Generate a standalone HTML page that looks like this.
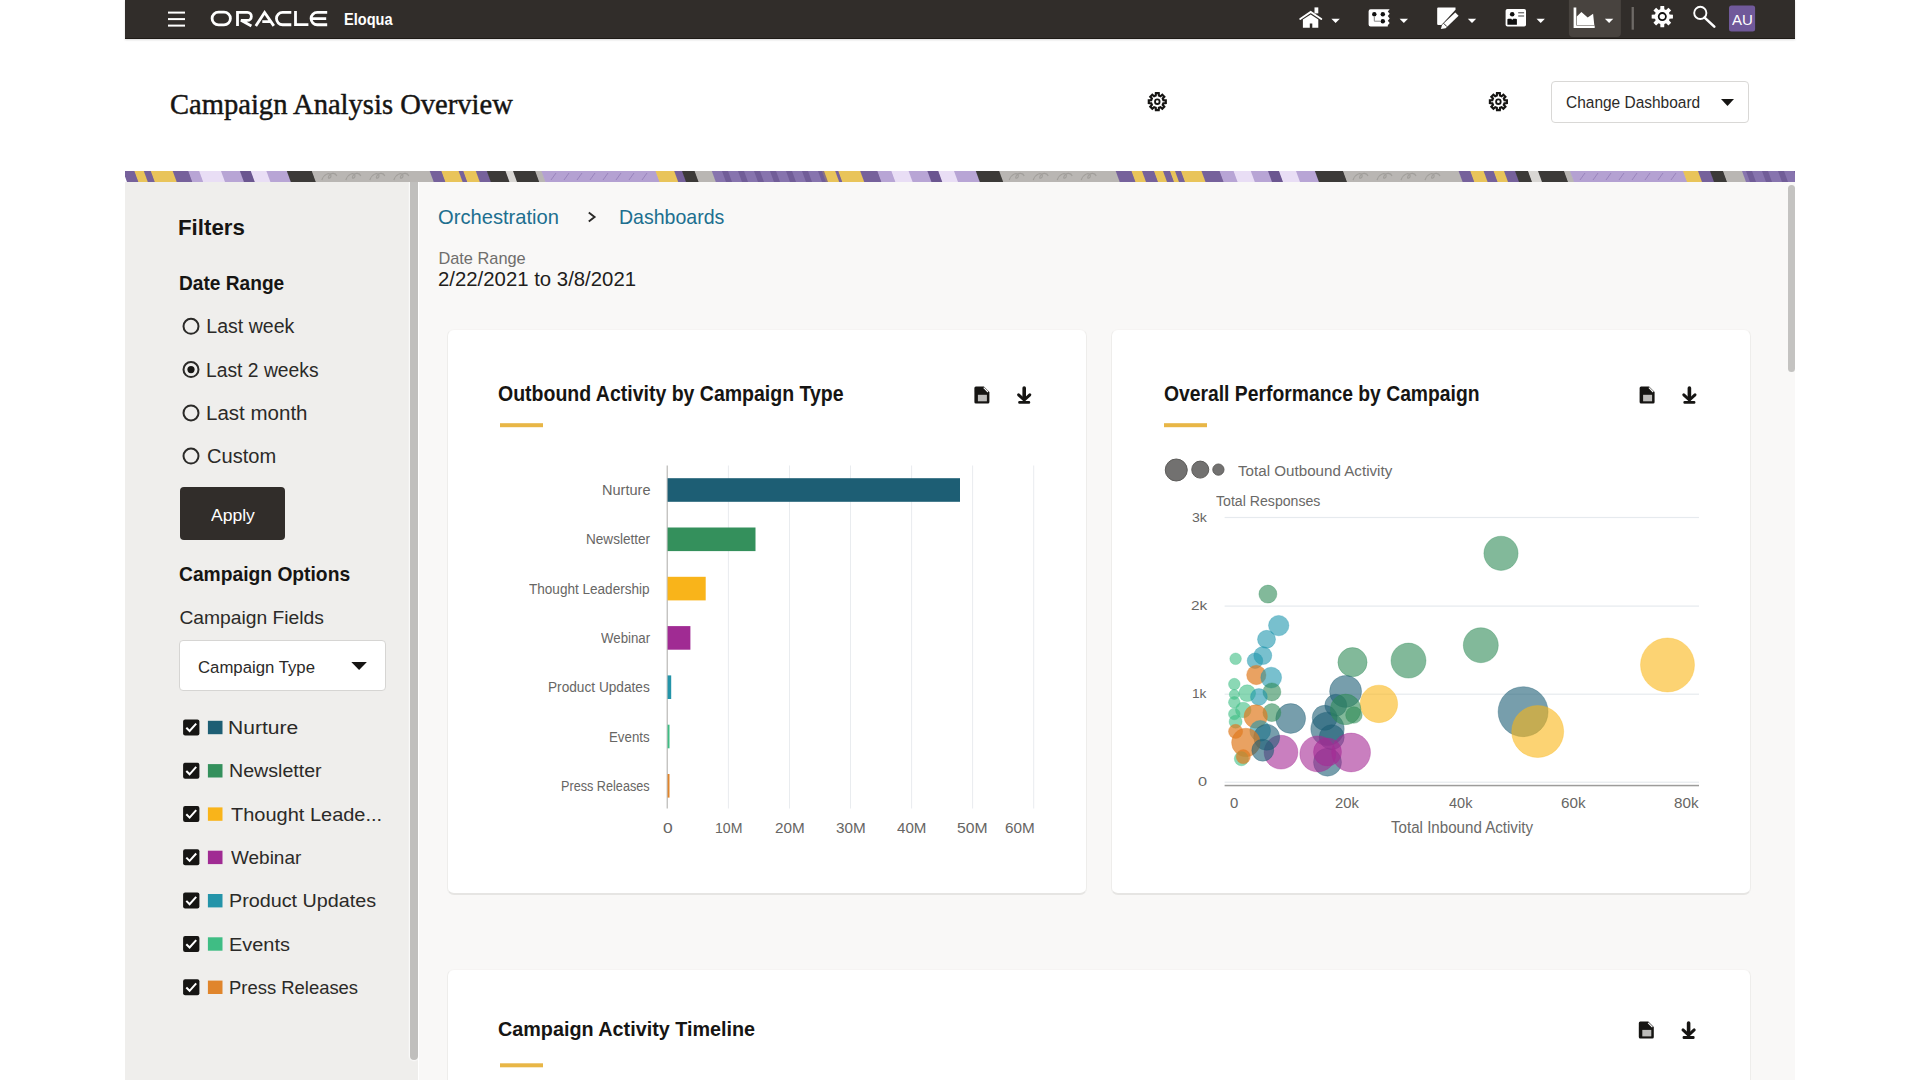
<!DOCTYPE html>
<html><head><meta charset="utf-8"><title>Campaign Analysis Overview</title>
<style>
*{margin:0;padding:0;box-sizing:border-box}
html,body{width:1920px;height:1080px;overflow:hidden;background:#fff;font-family:"Liberation Sans",sans-serif}
.t{position:absolute;white-space:nowrap;line-height:1;transform-origin:0 0}
.b{position:absolute}
svg{position:absolute;left:0;top:0;overflow:visible}
</style></head><body>

<div class="b" style="left:125px;top:0;width:1670px;height:39px;background:#312d2a;border-bottom:1.5px solid #1e1a16;box-shadow:0 1px 2px rgba(0,0,0,.15)"></div>
<div class="b" style="left:125px;top:182px;width:293px;height:898px;background:#efeeec"></div>
<div class="b" style="left:410.4px;top:182px;width:7.3px;height:878px;background:#c0bfbd;border-radius:0 0 4px 4px;box-shadow:0 0 1.5px 1px rgba(255,255,255,.8)"></div>
<div class="b" style="left:418.5px;top:182px;width:1376.5px;height:898px;background:#f9f8f7"></div>
<div class="b" style="left:1787.5px;top:185px;width:7px;height:187px;background:#c4c3c1;border-radius:4px"></div>
<div class="b" style="left:125px;top:171px;width:1670px;height:11px;overflow:hidden"><svg width="1670" height="11" viewBox="125 171 1670 11" style="position:absolute;left:0;top:0">
<polygon points="123.0,171 135.0,171 139.0,182 127.0,182" fill="#76619b"/>
<polygon points="134.4,171 144.4,171 148.4,182 138.4,182" fill="#e9c45a"/>
<polygon points="143.8,171 151.4,171 155.4,182 147.8,182" fill="#76619b"/>
<polygon points="150.8,171 173.3,171 177.3,182 154.8,182" fill="#e9c45a"/>
<polygon points="172.7,171 188.9,171 192.9,182 176.7,182" fill="#76619b"/>
<polygon points="188.3,171 199.8,171 203.8,182 192.3,182" fill="#b8a5d5"/>
<polygon points="199.2,171 221.6,171 225.6,182 203.2,182" fill="#e9def5"/>
<polygon points="221.0,171 240.5,171 244.5,182 225.0,182" fill="#b8a5d5"/>
<polygon points="239.9,171 251.4,171 255.4,182 243.9,182" fill="#6b5690"/>
<polygon points="250.8,171 267.0,171 271.0,182 254.8,182" fill="#e9def5"/>
<polygon points="266.4,171 287.4,171 291.4,182 270.4,182" fill="#b8a5d5"/>
<polygon points="286.8,171 312.4,171 316.4,182 290.8,182" fill="#3c3a38"/>
<polygon points="311.8,171 430.3,171 434.3,182 315.8,182" fill="#b9b6b3"/>
<polygon points="429.7,171 442.0,171 446.0,182 433.7,182" fill="#76619b"/>
<polygon points="441.4,171 459.2,171 463.2,182 445.4,182" fill="#e9c45a"/>
<polygon points="458.6,171 463.9,171 467.9,182 462.6,182" fill="#76619b"/>
<polygon points="463.3,171 476.4,171 480.4,182 467.3,182" fill="#e9c45a"/>
<polygon points="475.8,171 487.4,171 491.4,182 479.8,182" fill="#76619b"/>
<polygon points="486.8,171 506.1,171 510.1,182 490.8,182" fill="#3c3a38"/>
<polygon points="505.5,171 513.6,171 517.6,182 509.5,182" fill="#d9d7d4"/>
<polygon points="513.0,171 535.8,171 539.8,182 517.0,182" fill="#3c3a38"/>
<polygon points="535.2,171 542.0,171 546.0,182 539.2,182" fill="#b9b6b3"/>
<polygon points="541.4,171 656.1,171 660.1,182 545.4,182" fill="#b4a1d2"/>
<polygon points="655.5,171 674.9,171 678.9,182 659.5,182" fill="#e9c45a"/>
<polygon points="674.2,171 682.6,171 686.6,182 678.2,182" fill="#76619b"/>
<polygon points="682.0,171 695.2,171 699.2,182 686.0,182" fill="#3c3a38"/>
<polygon points="694.6,171 712.4,171 716.4,182 698.6,182" fill="#b9b6b3"/>
<polygon points="711.8,171 822.5,171 826.5,182 715.8,182" fill="#8774ae"/>
<polygon points="821.9,171 835.8,171 839.8,182 825.9,182" fill="#e9c45a"/>
<polygon points="835.2,171 838.9,171 842.9,182 839.2,182" fill="#76619b"/>
<polygon points="838.3,171 860.8,171 864.8,182 842.3,182" fill="#e9c45a"/>
<polygon points="860.2,171 878.0,171 882.0,182 864.2,182" fill="#76619b"/>
<polygon points="877.4,171 892.0,171 896.0,182 881.4,182" fill="#b8a5d5"/>
<polygon points="891.4,171 909.2,171 913.2,182 895.4,182" fill="#e9def5"/>
<polygon points="908.6,171 928.0,171 932.0,182 912.6,182" fill="#b8a5d5"/>
<polygon points="927.4,171 938.9,171 942.9,182 931.4,182" fill="#6b5690"/>
<polygon points="938.3,171 954.6,171 958.6,182 942.3,182" fill="#e9def5"/>
<polygon points="954.0,171 976.4,171 980.4,182 958.0,182" fill="#b8a5d5"/>
<polygon points="975.8,171 999.9,171 1003.9,182 979.8,182" fill="#3c3a38"/>
<polygon points="999.2,171 1116.3,171 1120.3,182 1003.2,182" fill="#b9b6b3"/>
<polygon points="1115.7,171 1132.1,171 1136.1,182 1119.7,182" fill="#76619b"/>
<polygon points="1131.5,171 1142.6,171 1146.6,182 1135.5,182" fill="#e9c45a"/>
<polygon points="1142.0,171 1154.6,171 1158.6,182 1146.0,182" fill="#76619b"/>
<polygon points="1154.0,171 1163.6,171 1167.6,182 1158.0,182" fill="#e9c45a"/>
<polygon points="1163.0,171 1170.6,171 1174.6,182 1167.0,182" fill="#76619b"/>
<polygon points="1170.0,171 1175.6,171 1179.6,182 1174.0,182" fill="#e9c45a"/>
<polygon points="1175.0,171 1181.6,171 1185.6,182 1179.0,182" fill="#76619b"/>
<polygon points="1181.0,171 1202.1,171 1206.1,182 1185.0,182" fill="#e9c45a"/>
<polygon points="1201.5,171 1220.2,171 1224.2,182 1205.5,182" fill="#76619b"/>
<polygon points="1219.6,171 1234.2,171 1238.2,182 1223.6,182" fill="#b8a5d5"/>
<polygon points="1233.6,171 1251.4,171 1255.4,182 1237.6,182" fill="#e9def5"/>
<polygon points="1250.8,171 1268.6,171 1272.6,182 1254.8,182" fill="#b8a5d5"/>
<polygon points="1268.0,171 1279.6,171 1283.6,182 1272.0,182" fill="#6b5690"/>
<polygon points="1279.0,171 1296.6,171 1300.6,182 1283.0,182" fill="#e9def5"/>
<polygon points="1296.0,171 1315.5,171 1319.5,182 1300.0,182" fill="#b8a5d5"/>
<polygon points="1314.9,171 1343.6,171 1347.6,182 1318.9,182" fill="#3c3a38"/>
<polygon points="1343.0,171 1459.2,171 1463.2,182 1347.0,182" fill="#b9b6b3"/>
<polygon points="1458.6,171 1470.9,171 1474.9,182 1462.6,182" fill="#76619b"/>
<polygon points="1470.3,171 1484.2,171 1488.2,182 1474.3,182" fill="#e9c45a"/>
<polygon points="1483.6,171 1494.2,171 1498.2,182 1487.6,182" fill="#76619b"/>
<polygon points="1493.6,171 1504.6,171 1508.6,182 1497.6,182" fill="#e9c45a"/>
<polygon points="1504.0,171 1515.6,171 1519.6,182 1508.0,182" fill="#76619b"/>
<polygon points="1515.0,171 1528.6,171 1532.6,182 1519.0,182" fill="#3c3a38"/>
<polygon points="1528.0,171 1538.6,171 1542.6,182 1532.0,182" fill="#d9d7d4"/>
<polygon points="1538.0,171 1564.6,171 1568.6,182 1542.0,182" fill="#3c3a38"/>
<polygon points="1564.0,171 1570.6,171 1574.6,182 1568.0,182" fill="#b9b6b3"/>
<polygon points="1570.0,171 1683.6,171 1687.6,182 1574.0,182" fill="#b4a1d2"/>
<polygon points="1683.0,171 1698.6,171 1702.6,182 1687.0,182" fill="#e9c45a"/>
<polygon points="1698.0,171 1710.6,171 1714.6,182 1702.0,182" fill="#76619b"/>
<polygon points="1710.0,171 1723.6,171 1727.6,182 1714.0,182" fill="#3c3a38"/>
<polygon points="1723.0,171 1742.6,171 1746.6,182 1727.0,182" fill="#b9b6b3"/>
<polygon points="1742.0,171 1798.6,171 1802.6,182 1746.0,182" fill="#8774ae"/>
<path d="M321.8 180 C323.8 174 329.8 172 330.8 175 C331.8 178 326.8 180 328.8 176 C330.8 172 335.8 173 336.8 176 M345.8 180 C347.8 174 353.8 172 354.8 175 C355.8 178 350.8 180 352.8 176 C354.8 172 359.8 173 360.8 176 M369.8 180 C371.8 174 377.8 172 378.8 175 C379.8 178 374.8 180 376.8 176 C378.8 172 383.8 173 384.8 176 M393.8 180 C395.8 174 401.8 172 402.8 175 C403.8 178 398.8 180 400.8 176 C402.8 172 407.8 173 408.8 176 " fill="none" stroke="#9b9895" stroke-width="1.1" opacity=".8"/>
<path d="M551 180 L556 173" stroke="#8f79b5" stroke-width="1" opacity=".7"/>
<path d="M564 180 L569 173" stroke="#8f79b5" stroke-width="1" opacity=".7"/>
<path d="M577 180 L582 173" stroke="#8f79b5" stroke-width="1" opacity=".7"/>
<path d="M590 180 L595 173" stroke="#8f79b5" stroke-width="1" opacity=".7"/>
<path d="M603 180 L608 173" stroke="#8f79b5" stroke-width="1" opacity=".7"/>
<path d="M616 180 L621 173" stroke="#8f79b5" stroke-width="1" opacity=".7"/>
<path d="M629 180 L634 173" stroke="#8f79b5" stroke-width="1" opacity=".7"/>
<path d="M642 180 L647 173" stroke="#8f79b5" stroke-width="1" opacity=".7"/>
<path d="M1009.2 180 C1011.2 174 1017.2 172 1018.2 175 C1019.2 178 1014.2 180 1016.2 176 C1018.2 172 1023.2 173 1024.2 176 M1033.2 180 C1035.2 174 1041.2 172 1042.2 175 C1043.2 178 1038.2 180 1040.2 176 C1042.2 172 1047.2 173 1048.2 176 M1057.2 180 C1059.2 174 1065.2 172 1066.2 175 C1067.2 178 1062.2 180 1064.2 176 C1066.2 172 1071.2 173 1072.2 176 M1081.2 180 C1083.2 174 1089.2 172 1090.2 175 C1091.2 178 1086.2 180 1088.2 176 C1090.2 172 1095.2 173 1096.2 176 " fill="none" stroke="#9b9895" stroke-width="1.1" opacity=".8"/>
<path d="M1353.0 180 C1355.0 174 1361.0 172 1362.0 175 C1363.0 178 1358.0 180 1360.0 176 C1362.0 172 1367.0 173 1368.0 176 M1377.0 180 C1379.0 174 1385.0 172 1386.0 175 C1387.0 178 1382.0 180 1384.0 176 C1386.0 172 1391.0 173 1392.0 176 M1401.0 180 C1403.0 174 1409.0 172 1410.0 175 C1411.0 178 1406.0 180 1408.0 176 C1410.0 172 1415.0 173 1416.0 176 M1425.0 180 C1427.0 174 1433.0 172 1434.0 175 C1435.0 178 1430.0 180 1432.0 176 C1434.0 172 1439.0 173 1440.0 176 " fill="none" stroke="#9b9895" stroke-width="1.1" opacity=".8"/>
<path d="M1580 180 L1585 173" stroke="#8f79b5" stroke-width="1" opacity=".7"/>
<path d="M1593 180 L1598 173" stroke="#8f79b5" stroke-width="1" opacity=".7"/>
<path d="M1606 180 L1611 173" stroke="#8f79b5" stroke-width="1" opacity=".7"/>
<path d="M1619 180 L1624 173" stroke="#8f79b5" stroke-width="1" opacity=".7"/>
<path d="M1632 180 L1637 173" stroke="#8f79b5" stroke-width="1" opacity=".7"/>
<path d="M1645 180 L1650 173" stroke="#8f79b5" stroke-width="1" opacity=".7"/>
<path d="M1658 180 L1663 173" stroke="#8f79b5" stroke-width="1" opacity=".7"/>
<path d="M1671 180 L1676 173" stroke="#8f79b5" stroke-width="1" opacity=".7"/>
<polygon points="722,171 728,171 732,182 726,182" fill="#6a5690" opacity=".75"/>
<polygon points="738,171 744,171 748,182 742,182" fill="#6a5690" opacity=".75"/>
<polygon points="754,171 760,171 764,182 758,182" fill="#6a5690" opacity=".75"/>
<polygon points="770,171 776,171 780,182 774,182" fill="#6a5690" opacity=".75"/>
<polygon points="786,171 792,171 796,182 790,182" fill="#6a5690" opacity=".75"/>
<polygon points="802,171 808,171 812,182 806,182" fill="#6a5690" opacity=".75"/>
<polygon points="818,171 824,171 828,182 822,182" fill="#6a5690" opacity=".75"/>
<polygon points="1746,171 1752,171 1756,182 1750,182" fill="#6a5690" opacity=".75"/>
<polygon points="1762,171 1768,171 1772,182 1766,182" fill="#6a5690" opacity=".75"/>
<polygon points="1778,171 1784,171 1788,182 1782,182" fill="#6a5690" opacity=".75"/>
<polygon points="1794,171 1800,171 1804,182 1798,182" fill="#6a5690" opacity=".75"/>
</svg></div>
<svg width="1920" height="40">
<rect x="168" y="11.6" width="17" height="2" fill="#fff"/>
<rect x="168" y="18.1" width="17" height="2" fill="#fff"/>
<rect x="168" y="24.6" width="17" height="2" fill="#fff"/>
<g fill="none" stroke="#fff" stroke-width="2.8">
<rect x="212.1" y="12.15" width="18.3" height="12.8" rx="6.4"/>
<path d="M237.5 26 V12.45 H247.4 A3.95 3.95 0 0 1 247.4 20.35 H241 L251.4 26"/>
<path d="M255.8 25.9 L264.6 12.4 L273.8 25.9 M262.3 21.6 H270.6"/>
<path d="M291.3 12.45 H282.6 A6.15 6.15 0 0 0 282.6 24.75 H291.3"/>
<path d="M295.5 11.1 V24.7 H308.4"/>
<path d="M327.2 12.45 H317.2 A6.15 6.15 0 0 0 317.2 24.75 H327.2 M311.4 18.6 H326.2"/>
</g>
<path d="M1300.2 19 L1310.7 12 L1321.3 19" fill="none" stroke="#fff" stroke-width="1.9" stroke-linecap="round"/>
<rect x="1314.5" y="7.4" width="3.8" height="6" fill="#fff"/>
<path d="M1302.9 19.6 L1310.7 14.4 L1318.3 19.6 V27.8 H1312.3 V23.4 H1309.8 V27.8 H1302.9Z" fill="#fff"/>
<path d="M1370.6 9.2 H1389.7 L1387.8 11.5 L1389.7 13.8 L1387.8 16.1 L1389.7 18.4 L1387.8 20.7 L1389.7 23 L1387.8 25.3 V26.6 H1370.6 Q1368.6 26.6 1368.6 24.6 V11.2 Q1368.6 9.2 1370.6 9.2Z" fill="#fff"/>
<circle cx="1374.3" cy="14.3" r="2.2" fill="#111"/><circle cx="1382.8" cy="14.3" r="2.2" fill="#111"/><circle cx="1382.8" cy="21.2" r="2.2" fill="#111"/>
<path d="M1374.3 17 V21.2 H1380" fill="none" stroke="#888" stroke-width="1"/>
<path d="M1438.2 7.4 H1455.5 V9.8 L1441.4 25 H1438.2 Q1437.2 25 1437.2 24 V8.4 Q1437.2 7.4 1438.2 7.4Z" fill="#fff"/>
<path d="M1455.3 12.6 L1458.6 15.7 L1445.6 28.2 L1440.9 29 L1442 24.9Z" fill="#fff"/>
<path d="M1443.6 23.3 L1446.9 26.6" stroke="#312d2a" stroke-width="1"/>
<rect x="1505.6" y="8.9" width="20.4" height="17.7" rx="1.8" fill="#fff"/>
<circle cx="1512.2" cy="14.3" r="2.3" fill="#111"/><path d="M1507.4 24.7 V19.6 Q1507.4 18.7 1508.5 18.7 H1511.3 L1512.2 20 L1513.1 18.7 H1515.9 Q1516.9 18.7 1516.9 19.6 V24.7Z" fill="#111"/>
<rect x="1518.2" y="12" width="5.9" height="1.4" fill="#777"/><rect x="1518.2" y="15.3" width="5.9" height="1.4" fill="#777"/>
<path d="M1568.9 0 H1620.9 V33 Q1620.9 37 1616.9 37 H1572.9 Q1568.9 37 1568.9 33Z" fill="#48433f"/>
<path d="M1573.6 7.4 H1576.3 V25.4 H1594.7 V28.1 H1573.6Z" fill="#fff"/>
<path d="M1576.8 25 V16.4 L1581.4 12.1 L1587.7 17.4 L1593.1 13.7 L1594.3 25Z" fill="#fff"/>
<path d="M1331.4 18.8 H1339.8 L1335.6 23Z" fill="#fff"/>
<path d="M1399.6 18.8 H1408.0 L1403.8 23Z" fill="#fff"/>
<path d="M1467.8 18.8 H1476.2 L1472.0 23Z" fill="#fff"/>
<path d="M1536.5 18.8 H1544.9 L1540.7 23Z" fill="#fff"/>
<path d="M1604.9 18.8 H1613.3 L1609.1 23Z" fill="#fff"/>
<rect x="1631.6" y="7" width="2.3" height="22.7" fill="#6e6a66"/>
<path d="M1660.27 9.28 L1660.40 5.97 L1664.20 5.97 L1664.33 9.28 L1666.04 9.98 L1668.48 7.74 L1671.16 10.42 L1668.92 12.86 L1669.62 14.57 L1672.93 14.70 L1672.93 18.50 L1669.62 18.63 L1668.92 20.34 L1671.16 22.78 L1668.48 25.46 L1666.04 23.22 L1664.33 23.92 L1664.20 27.23 L1660.40 27.23 L1660.27 23.92 L1658.56 23.22 L1656.12 25.46 L1653.44 22.78 L1655.68 20.34 L1654.98 18.63 L1651.67 18.50 L1651.67 14.70 L1654.98 14.57 L1655.68 12.86 L1653.44 10.42 L1656.12 7.74 L1658.56 9.98Z" fill="#fff"/>
<circle cx="1662.3" cy="16.6" r="3.6" fill="#fff" stroke="#111" stroke-width="1.8"/>
<circle cx="1700.3" cy="12.9" r="6.1" fill="none" stroke="#fff" stroke-width="1.9"/>
<path d="M1704.6 17.6 L1714.3 26.6" stroke="#fff" stroke-width="2.6" stroke-linecap="round"/>
<rect x="1729" y="5.4" width="26.1" height="26.1" rx="2.5" fill="#70599a"/>
</svg>
<div class="t" style="left:343.82px;top:12.16px;font-size:16.52px;font-weight:700;font-family:'Liberation Sans',sans-serif;color:#ffffff;transform:scaleX(0.8815);">Eloqua</div>
<div class="t" style="left:1732.0px;top:11.76px;font-size:15.22px;font-weight:400;font-family:'Liberation Sans',sans-serif;color:#ffffff;transform:scaleX(0.985);">AU</div>
<div class="t" style="left:170.01px;top:89.89px;font-size:28.92px;-webkit-text-stroke:0.45px #161513;font-weight:400;font-family:'Liberation Serif',serif;color:#161513;transform:scaleX(0.9884);">Campaign Analysis Overview</div>
<svg width="1920" height="140">
<path d="M1155.69 95.61 L1155.89 93.22 L1158.71 93.22 L1158.91 95.61 L1160.46 96.25 L1162.30 94.70 L1164.30 96.70 L1162.75 98.54 L1163.39 100.09 L1165.78 100.29 L1165.78 103.11 L1163.39 103.31 L1162.75 104.86 L1164.30 106.70 L1162.30 108.70 L1160.46 107.15 L1158.91 107.79 L1158.71 110.18 L1155.89 110.18 L1155.69 107.79 L1154.14 107.15 L1152.30 108.70 L1150.30 106.70 L1151.85 104.86 L1151.21 103.31 L1148.82 103.11 L1148.82 100.29 L1151.21 100.09 L1151.85 98.54 L1150.30 96.70 L1152.30 94.70 L1154.14 96.25Z" fill="none" stroke="#161513" stroke-width="2.2" stroke-linejoin="miter"/>
<circle cx="1157.3" cy="101.7" r="2.3" fill="none" stroke="#161513" stroke-width="1.8"/>
<path d="M1496.79 95.61 L1496.99 93.22 L1499.81 93.22 L1500.01 95.61 L1501.56 96.25 L1503.40 94.70 L1505.40 96.70 L1503.85 98.54 L1504.49 100.09 L1506.88 100.29 L1506.88 103.11 L1504.49 103.31 L1503.85 104.86 L1505.40 106.70 L1503.40 108.70 L1501.56 107.15 L1500.01 107.79 L1499.81 110.18 L1496.99 110.18 L1496.79 107.79 L1495.24 107.15 L1493.40 108.70 L1491.40 106.70 L1492.95 104.86 L1492.31 103.31 L1489.92 103.11 L1489.92 100.29 L1492.31 100.09 L1492.95 98.54 L1491.40 96.70 L1493.40 94.70 L1495.24 96.25Z" fill="none" stroke="#161513" stroke-width="2.2" stroke-linejoin="miter"/>
<circle cx="1498.4" cy="101.7" r="2.3" fill="none" stroke="#161513" stroke-width="1.8"/>
</svg>
<div class="b" style="left:1551px;top:81px;width:198px;height:42px;background:#fff;border:1px solid #d9d8d6;border-radius:4px"></div>
<div class="t" style="left:1566.03px;top:94.75px;font-size:15.94px;font-weight:400;font-family:'Liberation Sans',sans-serif;color:#2b2a28;transform:scaleX(0.9706);">Change Dashboard</div>
<svg width="1920" height="140"><path d="M1721 99 H1734 L1727.5 106Z" fill="#161513"/></svg>
<div class="t" style="left:178.05px;top:216.34px;font-size:22.9px;font-weight:700;font-family:'Liberation Sans',sans-serif;color:#161513;transform:scaleX(0.9727);">Filters</div>
<div class="t" style="left:179.04px;top:273.52px;font-size:19.86px;font-weight:700;font-family:'Liberation Sans',sans-serif;color:#161513;transform:scaleX(0.963);">Date Range</div>
<div class="t" style="left:206.3px;top:317.07px;font-size:19.57px;font-weight:400;font-family:'Liberation Sans',sans-serif;color:#2b2a28;">Last week</div>
<div class="t" style="left:206.33px;top:360.77px;font-size:19.57px;font-weight:400;font-family:'Liberation Sans',sans-serif;color:#2b2a28;transform:scaleX(0.9857);">Last 2 weeks</div>
<div class="t" style="left:206.2px;top:403.77px;font-size:19.57px;font-weight:400;font-family:'Liberation Sans',sans-serif;color:#2b2a28;transform:scaleX(1.0489);">Last month</div>
<div class="t" style="left:207.27px;top:446.67px;font-size:19.57px;font-weight:400;font-family:'Liberation Sans',sans-serif;color:#2b2a28;transform:scaleX(1.0262);">Custom</div>
<div class="t" style="left:179.41px;top:564.99px;font-size:19.42px;font-weight:700;font-family:'Liberation Sans',sans-serif;color:#161513;transform:scaleX(0.9918);">Campaign Options</div>
<div class="t" style="left:179.4px;top:608.02px;font-size:19.28px;font-weight:400;font-family:'Liberation Sans',sans-serif;color:#2b2a28;">Campaign Fields</div>
<svg width="1920" height="1080">
<circle cx="191" cy="326.3" r="7.5" fill="none" stroke="#2b2a28" stroke-width="2"/>
<circle cx="191" cy="369.6" r="7.5" fill="none" stroke="#2b2a28" stroke-width="2"/>
<circle cx="191" cy="369.6" r="3.6" fill="#161513"/>
<circle cx="191" cy="412.9" r="7.5" fill="none" stroke="#2b2a28" stroke-width="2"/>
<circle cx="191" cy="456.1" r="7.5" fill="none" stroke="#2b2a28" stroke-width="2"/>
</svg>
<div class="b" style="left:179.6px;top:487.4px;width:105.2px;height:52.6px;background:#312d2a;border-radius:4px"></div>
<div class="t" style="left:210.7px;top:506.84px;font-size:17.25px;font-weight:400;font-family:'Liberation Sans',sans-serif;color:#ffffff;transform:scaleX(1.0163);">Apply</div>
<div class="b" style="left:179.4px;top:639.6px;width:206.7px;height:51.1px;background:#fff;border:1px solid #d6d5d3;border-radius:4px"></div>
<div class="t" style="left:198.36px;top:659.33px;font-size:16.09px;font-weight:400;font-family:'Liberation Sans',sans-serif;color:#2b2a28;transform:scaleX(1.0414);">Campaign Type</div>
<svg width="1920" height="1080">
<path d="M351.3 662 H366.9 L359.1 670Z" fill="#161513"/>
<rect x="183.1" y="719.4" width="16.3" height="16" rx="2" fill="#161513"/>
<path d="M186.3 727.7 L189.6 731.0 L196.2 723.6" fill="none" stroke="#fff" stroke-width="2"/>
<rect x="207.9" y="720.8" width="14.6" height="13.4" fill="#1d5e74"/>
<rect x="183.1" y="762.7" width="16.3" height="16" rx="2" fill="#161513"/>
<path d="M186.3 771.0 L189.6 774.3 L196.2 766.9" fill="none" stroke="#fff" stroke-width="2"/>
<rect x="207.9" y="764.1" width="14.6" height="13.4" fill="#34905c"/>
<rect x="183.1" y="806.0" width="16.3" height="16" rx="2" fill="#161513"/>
<path d="M186.3 814.3 L189.6 817.6 L196.2 810.2" fill="none" stroke="#fff" stroke-width="2"/>
<rect x="207.9" y="807.4" width="14.6" height="13.4" fill="#f9b41a"/>
<rect x="183.1" y="849.3" width="16.3" height="16" rx="2" fill="#161513"/>
<path d="M186.3 857.6 L189.6 860.9 L196.2 853.5" fill="none" stroke="#fff" stroke-width="2"/>
<rect x="207.9" y="850.7" width="14.6" height="13.4" fill="#a02b93"/>
<rect x="183.1" y="892.6" width="16.3" height="16" rx="2" fill="#161513"/>
<path d="M186.3 900.9 L189.6 904.2 L196.2 896.8" fill="none" stroke="#fff" stroke-width="2"/>
<rect x="207.9" y="894.0" width="14.6" height="13.4" fill="#2494a9"/>
<rect x="183.1" y="935.9" width="16.3" height="16" rx="2" fill="#161513"/>
<path d="M186.3 944.2 L189.6 947.5 L196.2 940.1" fill="none" stroke="#fff" stroke-width="2"/>
<rect x="207.9" y="937.3" width="14.6" height="13.4" fill="#3fbd84"/>
<rect x="183.1" y="979.2" width="16.3" height="16" rx="2" fill="#161513"/>
<path d="M186.3 987.5 L189.6 990.8 L196.2 983.4" fill="none" stroke="#fff" stroke-width="2"/>
<rect x="207.9" y="980.6" width="14.6" height="13.4" fill="#e0852c"/>
</svg>
<div class="t" style="left:228.42px;top:718.02px;font-size:19.28px;font-weight:400;font-family:'Liberation Sans',sans-serif;color:#2b2a28;transform:scaleX(1.0918);">Nurture</div>
<div class="t" style="left:228.56px;top:761.32px;font-size:19.28px;font-weight:400;font-family:'Liberation Sans',sans-serif;color:#2b2a28;transform:scaleX(1.018);">Newsletter</div>
<div class="t" style="left:230.6px;top:804.62px;font-size:19.28px;font-weight:400;font-family:'Liberation Sans',sans-serif;color:#2b2a28;transform:scaleX(1.0375);">Thought Leade...</div>
<div class="t" style="left:230.6px;top:847.92px;font-size:19.28px;font-weight:400;font-family:'Liberation Sans',sans-serif;color:#2b2a28;transform:scaleX(0.9845);">Webinar</div>
<div class="t" style="left:228.55px;top:891.22px;font-size:19.28px;font-weight:400;font-family:'Liberation Sans',sans-serif;color:#2b2a28;transform:scaleX(1.0255);">Product Updates</div>
<div class="t" style="left:228.53px;top:934.52px;font-size:19.28px;font-weight:400;font-family:'Liberation Sans',sans-serif;color:#2b2a28;transform:scaleX(1.0339);">Events</div>
<div class="t" style="left:228.69px;top:977.82px;font-size:19.28px;font-weight:400;font-family:'Liberation Sans',sans-serif;color:#2b2a28;transform:scaleX(0.9568);">Press Releases</div>
<div class="t" style="left:438.44px;top:205.54px;font-size:21.01px;font-weight:400;font-family:'Liberation Sans',sans-serif;color:#206f8f;transform:scaleX(0.9597);">Orchestration</div>
<div class="t" style="left:619.44px;top:205.54px;font-size:21.01px;font-weight:400;font-family:'Liberation Sans',sans-serif;color:#206f8f;transform:scaleX(0.9306);">Dashboards</div>
<div class="t" style="left:438.4px;top:249.88px;font-size:16.38px;font-weight:400;font-family:'Liberation Sans',sans-serif;color:#6f6e6c;">Date Range</div>
<div class="t" style="left:438.38px;top:269.4px;font-size:20.0px;font-weight:400;font-family:'Liberation Sans',sans-serif;color:#1f1e1c;transform:scaleX(1.0176);">2/22/2021 to 3/8/2021</div>
<svg width="1920" height="1080"><path d="M588.8 212.4 L594.6 217 L588.8 221.6" fill="none" stroke="#2b2a28" stroke-width="1.9"/></svg>
<div class="b" style="left:446.8px;top:328.6px;width:639.8px;height:566.6px;background:#fff;border:1.5px solid #eeedeb;border-top-color:#f6f4f3;border-bottom:2px solid #e6e5e3;border-radius:7px"></div>
<div class="b" style="left:1111px;top:328.6px;width:639.8px;height:566.6px;background:#fff;border:1.5px solid #eeedeb;border-top-color:#f6f4f3;border-bottom:2px solid #e6e5e3;border-radius:7px"></div>
<div class="b" style="left:446.8px;top:968.6px;width:1303.8px;height:200px;background:#fff;border:1.5px solid #eeedeb;border-top-color:#f6f4f3;border-bottom:2px solid #e6e5e3;border-radius:7px"></div>
<div class="t" style="left:498.28px;top:382.61px;font-size:21.16px;font-weight:700;font-family:'Liberation Sans',sans-serif;color:#161513;transform:scaleX(0.9217);">Outbound Activity by Campaign Type</div>
<div class="t" style="left:1163.99px;top:382.61px;font-size:21.16px;font-weight:700;font-family:'Liberation Sans',sans-serif;color:#161513;transform:scaleX(0.9128);">Overall Performance by Campaign</div>
<div class="t" style="left:498.26px;top:1017.64px;font-size:21.01px;font-weight:700;font-family:'Liberation Sans',sans-serif;color:#161513;transform:scaleX(0.9412);">Campaign Activity Timeline</div>
<svg width="1920" height="1080">
<rect x="500" y="423.2" width="43" height="4" fill="#e8b646"/>
<rect x="1164" y="423.2" width="43" height="4" fill="#e8b646"/>
<rect x="500" y="1063.3" width="43" height="4" fill="#e8b646"/>
<path d="M975.9 386.4 H983.9 L989.4 391.9 V401.9 Q989.4 403.4 987.9 403.4 H975.9 Q974.4 403.4 974.4 401.9 V387.9 Q974.4 386.4 975.9 386.4Z" fill="#161513"/><rect x="977.9" y="394.79999999999995" width="9" height="6.5" fill="#bdbcba"/><path d="M983.6999999999999 387.7 L988.0 392.0" stroke="#fff" stroke-width="1.2"/>
<path d="M1024.2 388.0 V398.9" stroke="#161513" stroke-width="3.6" stroke-linecap="round"/><path d="M1018.6 394.79999999999995 L1024.2 400.0 L1029.8 394.79999999999995" fill="none" stroke="#161513" stroke-width="3" stroke-linejoin="round" stroke-linecap="round"/><rect x="1018.2" y="401.0" width="12" height="2.8" rx="1.2" fill="#161513"/>
<path d="M1641.1 386.4 H1649.1 L1654.6 391.9 V401.9 Q1654.6 403.4 1653.1 403.4 H1641.1 Q1639.6 403.4 1639.6 401.9 V387.9 Q1639.6 386.4 1641.1 386.4Z" fill="#161513"/><rect x="1643.1" y="394.79999999999995" width="9" height="6.5" fill="#bdbcba"/><path d="M1648.8999999999999 387.7 L1653.1999999999998 392.0" stroke="#fff" stroke-width="1.2"/>
<path d="M1689.4 388.0 V398.9" stroke="#161513" stroke-width="3.6" stroke-linecap="round"/><path d="M1683.8000000000002 394.79999999999995 L1689.4 400.0 L1695.0 394.79999999999995" fill="none" stroke="#161513" stroke-width="3" stroke-linejoin="round" stroke-linecap="round"/><rect x="1683.4" y="401.0" width="12" height="2.8" rx="1.2" fill="#161513"/>
<path d="M1640.3 1021.5 H1648.3 L1653.8 1027.0 V1037.0 Q1653.8 1038.5 1652.3 1038.5 H1640.3 Q1638.8 1038.5 1638.8 1037.0 V1023.0 Q1638.8 1021.5 1640.3 1021.5Z" fill="#161513"/><rect x="1642.3" y="1029.9" width="9" height="6.5" fill="#bdbcba"/><path d="M1648.1 1022.8 L1652.3999999999999 1027.1" stroke="#fff" stroke-width="1.2"/>
<path d="M1688.6 1023.1 V1034.0" stroke="#161513" stroke-width="3.6" stroke-linecap="round"/><path d="M1683.0 1029.9 L1688.6 1035.1 L1694.1999999999998 1029.9" fill="none" stroke="#161513" stroke-width="3" stroke-linejoin="round" stroke-linecap="round"/><rect x="1682.6" y="1036.1" width="12" height="2.8" rx="1.2" fill="#161513"/>
</svg>
<svg width="1920" height="1080">
<rect x="727.9" y="465.5" width="1" height="343" fill="#e9ecef"/>
<rect x="789.0" y="465.5" width="1" height="343" fill="#e9ecef"/>
<rect x="850.0" y="465.5" width="1" height="343" fill="#e9ecef"/>
<rect x="911.1" y="465.5" width="1" height="343" fill="#e9ecef"/>
<rect x="972.1" y="465.5" width="1" height="343" fill="#e9ecef"/>
<rect x="1033.2" y="465.5" width="1" height="343" fill="#e9ecef"/>
<rect x="666.6" y="465.5" width="1.3" height="343" fill="#bfbebc"/>
<rect x="667.6" y="478.2" width="292.4" height="23.6" fill="#1d5e74"/>
<rect x="667.6" y="527.5" width="87.9" height="23.6" fill="#34905c"/>
<rect x="667.6" y="576.8" width="38.1" height="23.6" fill="#f9b41a"/>
<rect x="667.6" y="626.1" width="22.8" height="23.6" fill="#a02b93"/>
<rect x="667.6" y="675.4" width="3.6" height="23.6" fill="#2494a9"/>
<rect x="667.6" y="724.7" width="1.9" height="23.6" fill="#3fbd84"/>
<rect x="667.6" y="774.0" width="1.9" height="23.6" fill="#e0852c"/>
</svg>
<div class="t" style="left:601.96px;top:483.1px;font-size:14.06px;font-weight:400;font-family:'Liberation Sans',sans-serif;color:#676664;transform:scaleX(1.0356);">Nurture</div>
<div class="t" style="left:585.83px;top:532.4px;font-size:14.06px;font-weight:400;font-family:'Liberation Sans',sans-serif;color:#676664;transform:scaleX(0.9662);">Newsletter</div>
<div class="t" style="left:529.0px;top:581.7px;font-size:14.06px;font-weight:400;font-family:'Liberation Sans',sans-serif;color:#676664;transform:scaleX(0.9648);">Thought Leadership</div>
<div class="t" style="left:600.5px;top:631.0px;font-size:14.06px;font-weight:400;font-family:'Liberation Sans',sans-serif;color:#676664;transform:scaleX(0.9442);">Webinar</div>
<div class="t" style="left:548.43px;top:680.3px;font-size:14.06px;font-weight:400;font-family:'Liberation Sans',sans-serif;color:#676664;transform:scaleX(0.9728);">Product Updates</div>
<div class="t" style="left:608.95px;top:729.6px;font-size:14.06px;font-weight:400;font-family:'Liberation Sans',sans-serif;color:#676664;transform:scaleX(0.9452);">Events</div>
<div class="t" style="left:561.3px;top:778.9px;font-size:14.06px;font-weight:400;font-family:'Liberation Sans',sans-serif;color:#676664;transform:scaleX(0.901);">Press Releases</div>
<div class="t" style="left:662.73px;top:821.5px;font-size:13.77px;font-weight:400;font-family:'Liberation Sans',sans-serif;color:#676664;transform:scaleX(1.2667);">0</div>
<div class="t" style="left:715.38px;top:821.5px;font-size:13.77px;font-weight:400;font-family:'Liberation Sans',sans-serif;color:#676664;transform:scaleX(1.024);">10M</div>
<div class="t" style="left:774.89px;top:821.5px;font-size:13.77px;font-weight:400;font-family:'Liberation Sans',sans-serif;color:#676664;transform:scaleX(1.108);">20M</div>
<div class="t" style="left:835.79px;top:821.5px;font-size:13.77px;font-weight:400;font-family:'Liberation Sans',sans-serif;color:#676664;transform:scaleX(1.108);">30M</div>
<div class="t" style="left:897.4px;top:821.5px;font-size:13.77px;font-weight:400;font-family:'Liberation Sans',sans-serif;color:#676664;transform:scaleX(1.0962);">40M</div>
<div class="t" style="left:957.16px;top:821.5px;font-size:13.77px;font-weight:400;font-family:'Liberation Sans',sans-serif;color:#676664;transform:scaleX(1.14);">50M</div>
<div class="t" style="left:1004.89px;top:821.5px;font-size:13.77px;font-weight:400;font-family:'Liberation Sans',sans-serif;color:#676664;transform:scaleX(1.108);">60M</div>
<svg width="1920" height="1080">
<circle cx="1176.25" cy="470" r="11" fill="#727170" stroke="#5d5c5a" stroke-width="1"/>
<circle cx="1200.25" cy="469.6" r="8.5" fill="#727170" stroke="#5d5c5a" stroke-width="1"/>
<circle cx="1218.4" cy="469.6" r="5.6" fill="#727170" stroke="#5d5c5a" stroke-width="1"/>
<rect x="1224.6" y="516.9" width="474.4" height="1.2" fill="#e6eaee" transform="scale(1,1)"/>
<rect x="1224.6" y="605.5" width="474.4" height="1.2" fill="#e6eaee" transform="scale(1,1)"/>
<rect x="1224.6" y="693.6" width="474.4" height="1.2" fill="#e6eaee" transform="scale(1,1)"/>
<rect x="1224.6" y="781.6" width="474.4" height="1.2" fill="#e6eaee" transform="scale(1,1)"/>
<rect x="1224.6" y="784.8" width="474.4" height="1.5" fill="#9d9c9a"/>
</svg>
<div class="t" style="left:1237.5px;top:463.13px;font-size:15.43px;font-weight:400;font-family:'Liberation Sans',sans-serif;color:#6a6967;transform:scaleX(0.9834);">Total Outbound Activity</div>
<div class="t" style="left:1216.25px;top:493.93px;font-size:14.49px;font-weight:400;font-family:'Liberation Sans',sans-serif;color:#6a6967;transform:scaleX(0.9752);">Total Responses</div>
<div class="t" style="left:1391.3px;top:819.03px;font-size:16.09px;font-weight:400;font-family:'Liberation Sans',sans-serif;color:#6a6967;transform:scaleX(0.9404);">Total Inbound Activity</div>
<div class="t" style="left:1230.46px;top:796.3px;font-size:14.35px;font-weight:400;font-family:'Liberation Sans',sans-serif;color:#676664;transform:scaleX(1.0357);">0</div>
<div class="t" style="left:1335.47px;top:796.3px;font-size:14.35px;font-weight:400;font-family:'Liberation Sans',sans-serif;color:#676664;transform:scaleX(1.0318);">20k</div>
<div class="t" style="left:1448.75px;top:796.3px;font-size:14.35px;font-weight:400;font-family:'Liberation Sans',sans-serif;color:#676664;transform:scaleX(1.0109);">40k</div>
<div class="t" style="left:1560.84px;top:796.3px;font-size:14.35px;font-weight:400;font-family:'Liberation Sans',sans-serif;color:#676664;transform:scaleX(1.0614);">60k</div>
<div class="t" style="left:1673.74px;top:796.3px;font-size:14.35px;font-weight:400;font-family:'Liberation Sans',sans-serif;color:#676664;transform:scaleX(1.0591);">80k</div>
<div class="t" style="left:1191.71px;top:511.12px;font-size:13.62px;font-weight:400;font-family:'Liberation Sans',sans-serif;color:#676664;transform:scaleX(1.0385);">3k</div>
<div class="t" style="left:1190.87px;top:599.12px;font-size:13.62px;font-weight:400;font-family:'Liberation Sans',sans-serif;color:#676664;transform:scaleX(1.1308);">2k</div>
<div class="t" style="left:1192.0px;top:687.12px;font-size:13.62px;font-weight:400;font-family:'Liberation Sans',sans-serif;color:#676664;">1k</div>
<div class="t" style="left:1198.1px;top:775.12px;font-size:13.62px;font-weight:400;font-family:'Liberation Sans',sans-serif;color:#676664;transform:scaleX(1.2);">0</div>
<svg width="1920" height="1080">
<circle cx="1501" cy="553.3" r="17.1" fill="#2e8b57" fill-opacity=".6" stroke="#2e8b57" stroke-opacity=".3" stroke-width="1"/>
<circle cx="1267.9" cy="594.1" r="9" fill="#2e8b57" fill-opacity=".6" stroke="#2e8b57" stroke-opacity=".3" stroke-width="1"/>
<circle cx="1278.7" cy="625.6" r="10.2" fill="#1e96ae" fill-opacity=".6" stroke="#1e96ae" stroke-opacity=".3" stroke-width="1"/>
<circle cx="1266.5" cy="639.3" r="9" fill="#1e96ae" fill-opacity=".6" stroke="#1e96ae" stroke-opacity=".3" stroke-width="1"/>
<circle cx="1262.8" cy="655.6" r="9" fill="#1e96ae" fill-opacity=".6" stroke="#1e96ae" stroke-opacity=".3" stroke-width="1"/>
<circle cx="1255" cy="660.75" r="7.8" fill="#1e96ae" fill-opacity=".6" stroke="#1e96ae" stroke-opacity=".3" stroke-width="1"/>
<circle cx="1235.6" cy="658.8" r="5.8" fill="#3dbe83" fill-opacity=".6" stroke="#3dbe83" stroke-opacity=".3" stroke-width="1"/>
<circle cx="1352.5" cy="662.2" r="14.6" fill="#2e8b57" fill-opacity=".6" stroke="#2e8b57" stroke-opacity=".3" stroke-width="1"/>
<circle cx="1408.5" cy="660.6" r="17.5" fill="#2e8b57" fill-opacity=".6" stroke="#2e8b57" stroke-opacity=".3" stroke-width="1"/>
<circle cx="1480.8" cy="645.2" r="17.5" fill="#2e8b57" fill-opacity=".6" stroke="#2e8b57" stroke-opacity=".3" stroke-width="1"/>
<circle cx="1667.5" cy="665" r="27" fill="#fab516" fill-opacity=".6" stroke="#fab516" stroke-opacity=".3" stroke-width="1"/>
<circle cx="1523.1" cy="711.7" r="25" fill="#1d5e74" fill-opacity=".6" stroke="#1d5e74" stroke-opacity=".3" stroke-width="1"/>
<circle cx="1537.7" cy="731.5" r="26" fill="#fab516" fill-opacity=".6" stroke="#fab516" stroke-opacity=".3" stroke-width="1"/>
<circle cx="1378.9" cy="703.9" r="18.75" fill="#fab516" fill-opacity=".6" stroke="#fab516" stroke-opacity=".3" stroke-width="1"/>
<circle cx="1345.6" cy="691.4" r="16" fill="#1d5e74" fill-opacity=".6" stroke="#1d5e74" stroke-opacity=".3" stroke-width="1"/>
<circle cx="1335.8" cy="705.3" r="11" fill="#1d5e74" fill-opacity=".6" stroke="#1d5e74" stroke-opacity=".3" stroke-width="1"/>
<circle cx="1324.7" cy="717.8" r="12.5" fill="#1d5e74" fill-opacity=".6" stroke="#1d5e74" stroke-opacity=".3" stroke-width="1"/>
<circle cx="1327.5" cy="728.9" r="16.7" fill="#1d5e74" fill-opacity=".6" stroke="#1d5e74" stroke-opacity=".3" stroke-width="1"/>
<circle cx="1345.6" cy="709.4" r="15.3" fill="#2e8b57" fill-opacity=".6" stroke="#2e8b57" stroke-opacity=".3" stroke-width="1"/>
<circle cx="1353.9" cy="715" r="8.3" fill="#2e8b57" fill-opacity=".6" stroke="#2e8b57" stroke-opacity=".3" stroke-width="1"/>
<circle cx="1331.7" cy="737.2" r="12.5" fill="#1d5e74" fill-opacity=".6" stroke="#1d5e74" stroke-opacity=".3" stroke-width="1"/>
<circle cx="1327.5" cy="762.2" r="14" fill="#1d5e74" fill-opacity=".6" stroke="#1d5e74" stroke-opacity=".3" stroke-width="1"/>
<circle cx="1317.8" cy="753.9" r="18" fill="#a52a95" fill-opacity=".6" stroke="#a52a95" stroke-opacity=".3" stroke-width="1"/>
<circle cx="1351.1" cy="752.5" r="19.4" fill="#a52a95" fill-opacity=".6" stroke="#a52a95" stroke-opacity=".3" stroke-width="1"/>
<circle cx="1327.5" cy="752" r="14" fill="#a52a95" fill-opacity=".6" stroke="#a52a95" stroke-opacity=".3" stroke-width="1"/>
<circle cx="1290.7" cy="718.5" r="14.9" fill="#1d5e74" fill-opacity=".6" stroke="#1d5e74" stroke-opacity=".3" stroke-width="1"/>
<circle cx="1281" cy="752.2" r="16.9" fill="#a52a95" fill-opacity=".6" stroke="#a52a95" stroke-opacity=".3" stroke-width="1"/>
<circle cx="1256.3" cy="675" r="9.7" fill="#e07b20" fill-opacity=".7" stroke="#e07b20" stroke-opacity=".3" stroke-width="1"/>
<circle cx="1271.2" cy="677.6" r="10.4" fill="#1e96ae" fill-opacity=".6" stroke="#1e96ae" stroke-opacity=".3" stroke-width="1"/>
<circle cx="1271.9" cy="691.9" r="9" fill="#2e8b57" fill-opacity=".6" stroke="#2e8b57" stroke-opacity=".3" stroke-width="1"/>
<circle cx="1234.3" cy="684.1" r="5.8" fill="#3dbe83" fill-opacity=".6" stroke="#3dbe83" stroke-opacity=".3" stroke-width="1"/>
<circle cx="1247.2" cy="693.2" r="8.4" fill="#3dbe83" fill-opacity=".6" stroke="#3dbe83" stroke-opacity=".3" stroke-width="1"/>
<circle cx="1234.3" cy="694.5" r="5" fill="#3dbe83" fill-opacity=".6" stroke="#3dbe83" stroke-opacity=".3" stroke-width="1"/>
<circle cx="1258.9" cy="697" r="8.4" fill="#1e96ae" fill-opacity=".6" stroke="#1e96ae" stroke-opacity=".3" stroke-width="1"/>
<circle cx="1234.3" cy="702.3" r="5.8" fill="#3dbe83" fill-opacity=".6" stroke="#3dbe83" stroke-opacity=".3" stroke-width="1"/>
<circle cx="1234.3" cy="714" r="5.8" fill="#3dbe83" fill-opacity=".6" stroke="#3dbe83" stroke-opacity=".3" stroke-width="1"/>
<circle cx="1243.3" cy="710" r="7.8" fill="#3dbe83" fill-opacity=".6" stroke="#3dbe83" stroke-opacity=".3" stroke-width="1"/>
<circle cx="1235.6" cy="721.7" r="6.5" fill="#3dbe83" fill-opacity=".6" stroke="#3dbe83" stroke-opacity=".3" stroke-width="1"/>
<circle cx="1271.9" cy="712.6" r="9" fill="#2e8b57" fill-opacity=".6" stroke="#2e8b57" stroke-opacity=".3" stroke-width="1"/>
<circle cx="1255.7" cy="716.5" r="11.7" fill="#e07b20" fill-opacity=".7" stroke="#e07b20" stroke-opacity=".3" stroke-width="1"/>
<circle cx="1260.2" cy="730.8" r="10.4" fill="#1e96ae" fill-opacity=".6" stroke="#1e96ae" stroke-opacity=".3" stroke-width="1"/>
<circle cx="1266.7" cy="737.3" r="13" fill="#1d5e74" fill-opacity=".6" stroke="#1d5e74" stroke-opacity=".3" stroke-width="1"/>
<circle cx="1235.6" cy="731.4" r="7.1" fill="#e07b20" fill-opacity=".7" stroke="#e07b20" stroke-opacity=".3" stroke-width="1"/>
<circle cx="1245.9" cy="742.5" r="14.3" fill="#e07b20" fill-opacity=".7" stroke="#e07b20" stroke-opacity=".3" stroke-width="1"/>
<circle cx="1241.4" cy="758.7" r="7.1" fill="#3dbe83" fill-opacity=".6" stroke="#3dbe83" stroke-opacity=".3" stroke-width="1"/>
<circle cx="1243.3" cy="756.7" r="7.1" fill="#e07b20" fill-opacity=".7" stroke="#e07b20" stroke-opacity=".3" stroke-width="1"/>
<circle cx="1262.8" cy="750.2" r="11" fill="#1d5e74" fill-opacity=".6" stroke="#1d5e74" stroke-opacity=".3" stroke-width="1"/>
</svg>
</body></html>
